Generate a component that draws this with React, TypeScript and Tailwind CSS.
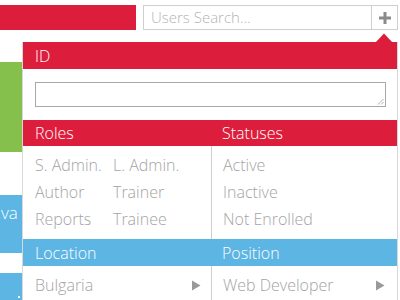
import React from 'react';

const font = { fontFamily: '"Open Sans", "Noto Sans", Arial, sans-serif' };

function Caret() {
  return (
    <svg width="10" height="11" viewBox="0 0 10 11" className="shrink-0">
      <path d="M1 0.5 L9.5 5.5 L1 10.5 Z" fill="#9a9a9a" />
    </svg>
  );
}

export default function App() {
  return (
    <div
      className="relative w-[400px] h-[300px] overflow-hidden bg-white font-light"
      style={font}
    >
      {/* top bar */}
      <div className="flex items-start pt-[5px]">
        <div className="w-[136px] h-[25px] bg-[#dc1e3c]" />
        <div className="ml-[7px] flex h-[25px] w-[255px]">
          <div className="flex-1 flex items-center border border-[#cfcfcf] px-[7px] text-[15px] text-[#b4b4b4]">
            Users Search...
          </div>
          <div className="w-[26px] flex items-center justify-center border border-l-0 border-[#cfcfcf]">
            <svg width="12" height="12" viewBox="0 0 12 12">
              <rect x="4.5" y="0" width="3" height="12" fill="#8a8a8a" />
              <rect x="0" y="4.5" width="12" height="3" fill="#8a8a8a" />
            </svg>
          </div>
        </div>
      </div>

      {/* tiles behind */}
      <div className="flex flex-col w-[120px] mt-[32px]">
        <div className="h-[90px] bg-[#86c04c]" />
        <div className="h-[58px] mt-[43px] bg-[#5db5e3] text-[17px] leading-none text-white pl-[1px] pt-[9px]">
          va
        </div>
        <div className="relative h-[27px] mt-[20px] bg-[#5db5e3]">
          <span className="absolute left-[18px] bottom-[2px] w-[2px] h-[2px] bg-white" />
        </div>
      </div>

      {/* filter panel */}
      <div className="absolute left-[22px] top-[42px] w-[376px] bg-white border-l border-r border-[#d8d8d8] text-[16px]">
        <svg
          width="18"
          height="10"
          viewBox="0 0 18 10"
          className="absolute -top-[9px] left-[352px]"
        >
          <path d="M0 10 L9 0.5 L18 10 Z" fill="#dc1e3c" />
        </svg>
        <div className="h-[27px] bg-[#dc1e3c] text-white flex items-center pl-[12px]">ID</div>
        <div className="px-[12px] py-[13px]">
          <div className="relative h-[25px] w-[351px] border border-[#a8a8a8]">
            <svg width="7" height="7" viewBox="0 0 7 7" className="absolute right-[1px] bottom-[1px]">
              <path d="M6.5 1 L1 6.5 M6.5 4 L4 6.5" stroke="#9a9a9a" strokeWidth="0.8" />
            </svg>
          </div>
        </div>

        <div className="grid grid-cols-[188px_1fr]">
          <div className="h-[26px] bg-[#dc1e3c] text-white flex items-center pl-[12px]">Roles</div>
          <div className="h-[26px] bg-[#dc1e3c] text-white flex items-center pl-[11px]">Statuses</div>

          <div className="pl-[12px] pt-[5px] pb-[7px] text-[#a4a4a4] grid grid-cols-[78px_1fr]">
            {['S. Admin.', 'L. Admin.', 'Author', 'Trainer', 'Reports', 'Trainee'].map((r) => (
              <div key={r} className="h-[27px] flex items-center">{r}</div>
            ))}
          </div>
          <div className="pl-[11px] pt-[5px] pb-[7px] text-[#a4a4a4] border-l border-[#cfcfcf]">
            {['Active', 'Inactive', 'Not Enrolled'].map((s) => (
              <div key={s} className="h-[27px] flex items-center">{s}</div>
            ))}
          </div>

          <div className="h-[27px] bg-[#5db5e3] text-white flex items-center pl-[12px]">Location</div>
          <div className="h-[27px] bg-[#5db5e3] text-white flex items-center pl-[11px]">Position</div>

          <div className="h-[38px] flex items-center justify-between pl-[12px] pr-[10px] text-[#a4a4a4]">
            <span>Bulgaria</span>
            <Caret />
          </div>
          <div className="h-[38px] flex items-center justify-between pl-[11px] pr-[12px] text-[#a4a4a4] border-l border-[#cfcfcf]">
            <span>Web Developer</span>
            <Caret />
          </div>
        </div>
      </div>
    </div>
  );
}
